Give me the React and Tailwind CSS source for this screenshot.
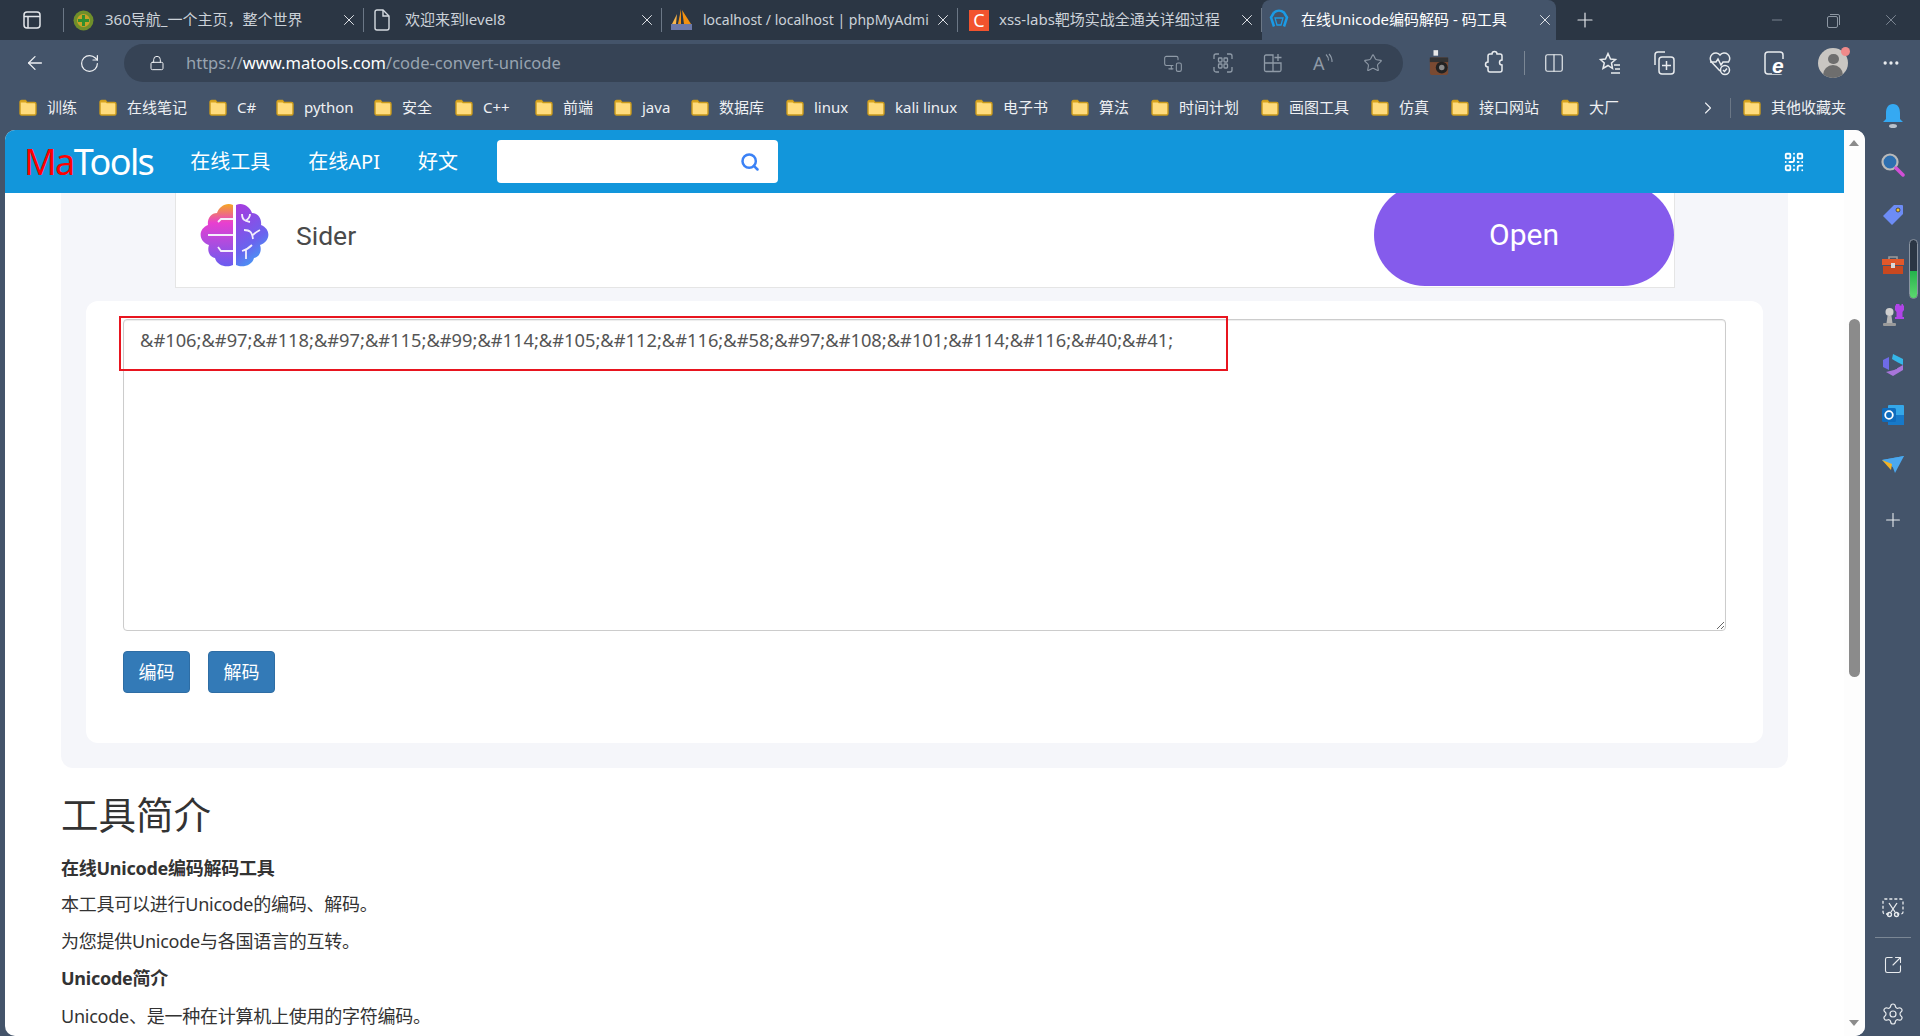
import React from "react";
import {
  ArrowLeft,
  RotateCw,
  Lock,
  Star,
  X,
  Plus,
  Minus,
  ChevronRight,
  Settings,
  SquareArrowOutUpRight,
  Search,
  QrCode,
  Ellipsis,
  Columns2,
  MonitorSmartphone,
} from "lucide-react";

const bookmarks = [
  ["训练", 80],
  ["在线笔记", 110],
  ["C#", 67],
  ["python", 98],
  ["安全", 81],
  ["C++", 80],
  ["前端", 79],
  ["java", 77],
  ["数据库", 95],
  ["linux", 81],
  ["kali linux", 108],
  ["电子书", 96],
  ["算法", 80],
  ["时间计划", 110],
  ["画图工具", 110],
  ["仿真", 80],
  ["接口网站", 110],
  ["大厂", 80],
];

const Folder = () => (
  <svg width="18" height="17" viewBox="0 0 18 17" className="shrink-0">
    <path d="M1 3a1.5 1.5 0 0 1 1.5-1.5h4L8 3.5h7.5A1.5 1.5 0 0 1 17 5v9.5a1.5 1.5 0 0 1-1.5 1.5h-13A1.5 1.5 0 0 1 1 14.500z" fill="#ffdc7d" stroke="#c99a1c" strokeWidth="1.4" />
    <path d="M1 3a1.5 1.500 0 0 1 1.500-1.500h4L8 3.500H1z" fill="#d9a520" />
  </svg>
);

const Tab = ({ icon, title, width, active, size = "text-[15px]" }) => (
  <div
    className={
      active
        ? `flex h-10 items-center rounded-t-lg bg-[#44546a] pl-[7px] pr-[2px] text-white ${width}`
        : `flex h-[24px] items-center border-r border-[#6b7786] pl-[9px] pr-[5px] text-[#ccd2d9] ${width}`
    }
  >
    <span className="flex w-[32px] shrink-0 items-center">{icon}</span>
    <span className={`min-w-0 flex-1 overflow-hidden whitespace-nowrap pb-[2px] ${size}`}>{title}</span>
    <X size={18} strokeWidth={1.300} className="ml-1 shrink-0 text-[#e3e6ea]" />
  </div>
);

const Fav360 = () => (
  <svg width="21" height="21" viewBox="0 0 21 21">
    <circle cx="10.500" cy="10.500" r="10" fill="#6f8f2a" />
    <circle cx="10.500" cy="10.500" r="6.500" fill="#c9a227" />
    <path d="M9 5h3v4h4v3h-4v4H9v-4H5V9h4z" fill="#2f8f2f" />
  </svg>
);

const FavFile = () => (
  <svg width="18" height="22" viewBox="0 0 18 22" fill="none" stroke="#d5dae0" strokeWidth="1.400">
    <path d="M2 3a2 2 0 0 1 2-2h6l6 6v12a2 2 0 0 1-2 2H4a2 2 0 0 1-2-2z" />
    <path d="M10 1v6h6" />
  </svg>
);

const FavPma = () => (
  <svg width="21" height="22" viewBox="0 0 21 22">
    <path d="M10 0 7 15h3z" fill="#f29111" />
    <path d="M11 1l2 14h7z" fill="#f29111" />
    <path d="M6 5 1 15h4z" fill="#f8b54a" />
    <rect x="0" y="15" width="21" height="6" fill="#6c78a8" />
  </svg>
);

const FavC = () => (
  <span className="ml-[2px] flex h-[21px] w-[20px] items-center justify-center bg-[#f2532e] text-[18px] leading-none text-white">C</span>
);

const FavMa = () => (
  <svg width="20" height="22" viewBox="0 0 20 22" fill="none" stroke="#1a9be6" strokeWidth="2.500">
    <path d="M5 3.500a8 8 0 0 1 10 0l3 5-3 9M5 3.500l-3 5 3 9" />
    <path d="M6 9h8l-2 7H8z" strokeWidth="1.300" />
  </svg>
);

const Camera = () => (
  <svg width="22" height="28" viewBox="0 0 24 30">
    <rect x="6" y="1" width="5" height="6" fill="#e8e8e8" />
    <rect x="2" y="9" width="20" height="19" rx="2" fill="#7a4a32" />
    <rect x="2" y="9" width="20" height="5" fill="#333" />
    <circle cx="15" cy="20" r="6.500" fill="#222" />
    <circle cx="15" cy="20" r="3" fill="#8a8a8a" />
  </svg>
);

const Puzzle = () => (
  <svg width="22" height="26" viewBox="0 0 22 26" fill="none" stroke="#e8ebee" strokeWidth="1.500">
    <path d="M7 4h2a2.500 2.500 0 0 1 5 0h3a2 2 0 0 1 2 2v4a2.500 2.500 0 0 0 0 5v5a2 2 0 0 1-2 2H7a2 2 0 0 1-2-2v-3a2.500 2.500 0 0 1 0-5V6a2 2 0 0 1 2-2z" />
  </svg>
);

const FavList = () => (
  <svg width="24" height="24" viewBox="0 0 24 24" fill="none" stroke="#e8ebee" strokeWidth="1.500">
    <path d="M10 2.500 12.500 8l5 .5-4 3.500 1 5.500-4.500-3-5 3 1.300-5.500L2.500 8.500l5-.5z" />
    <path d="M16 14h6M17 18h5M13 22h9" />
  </svg>
);

const Collections = () => (
  <svg width="24" height="26" viewBox="0 0 24 26" fill="none" stroke="#e8ebee" strokeWidth="1.500">
    <path d="M3 15V5a3 3 0 0 1 3-3h7" />
    <rect x="7" y="7" width="15" height="17" rx="3" />
    <path d="M14.500 11v9M10 15.500h9" />
  </svg>
);

const Health = () => (
  <svg width="24" height="26" viewBox="0 0 24 26" fill="none" stroke="#e8ebee" strokeWidth="1.500">
    <path d="M12 21 3.500 12a5.500 5.500 0 0 1 8.500-7 5.500 5.500 0 0 1 8.500 7" />
    <path d="M2 12h6l2-3 3 6 2-3h6" />
    <circle cx="17" cy="20" r="4.500" fill="#44546a" />
    <path d="m15 20 1.500 1.500 2.500-3" />
  </svg>
);

const EdgeE = () => (
  <svg width="24" height="26" viewBox="0 0 24 26">
    <rect x="2" y="2" width="18" height="22" rx="3" fill="none" stroke="#e8ebee" strokeWidth="1.500" />
    <rect x="9" y="9" width="15" height="15" fill="#44546a" />
    <text x="9" y="23" fontSize="21" fontWeight="700" fontStyle="italic" fill="#ffffff" fontFamily="Liberation Sans">e</text>
  </svg>
);

const ScanGrid = () => (
  <svg width="20" height="20" viewBox="0 0 20 20" fill="none" stroke="currentColor" strokeWidth="1.300">
    <path d="M6 1H3a2 2 0 0 0-2 2v3M14 1h3a2 2 0 0 1 2 2v3M6 19H3a2 2 0 0 1-2-2v-3M14 19h3a2 2 0 0 0 2-2v-3" />
    <rect x="5.500" y="5" width="3.500" height="4" rx="0.800" />
    <rect x="11" y="5" width="3.500" height="4" rx="0.800" />
    <rect x="5.500" y="11" width="3.500" height="4" rx="0.800" />
    <rect x="11" y="11" width="3.500" height="4" rx="0.800" />
  </svg>
);

const AppsAdd = () => (
  <svg width="20" height="20" viewBox="0 0 20 20" fill="none" stroke="currentColor" strokeWidth="1.300">
    <path d="M10 4V2H3a1.500 1.500 0 0 0-1.500 1.500V17A1.500 1.500 0 0 0 3 18.500h13.500A1.500 1.500 0 0 0 18 17v-7H1.500M10 4v14.500" />
    <path d="M15 1v7M11.500 4.500h7" />
  </svg>
);

const ReadAloud = () => (
  <span className="flex w-[20px] items-start text-[18px] leading-[20px]">
    A
    <svg width="8" height="10" viewBox="0 0 8 10" fill="none" stroke="currentColor" strokeWidth="1.100" className="shrink-0">
      <path d="M1 1.500a8 8 0 0 1 2.500 6M4 1a11 11 0 0 1 3 8" />
    </svg>
  </span>
);

const Avatar = () => (
  <div className="relative h-[30px] w-[30px]">
    <div className="flex h-[30px] w-[30px] flex-col items-center overflow-hidden rounded-full bg-[#c9c6c2]">
      <div className="mt-[6px] h-[11px] w-[11px] rounded-full bg-[#6e6e6e]" />
      <div className="mt-[1px] h-[14px] w-[20px] rounded-t-full bg-[#6e6e6e]" />
    </div>
    <span className="absolute -right-[2px] -top-[1px] h-[9px] w-[9px] rounded-full bg-[#f08a8a]" />
  </div>
);

const Brain = () => (
  <svg width="69" height="64" viewBox="0 0 69 64" className="shrink-0">
    <defs>
      <linearGradient id="leftLobe" x1="0.500" y1="0" x2="0.500" y2="1">
        <stop offset="0" stopColor="#f5a623" />
        <stop offset="0.300" stopColor="#e83fd0" />
        <stop offset="1" stopColor="#6a5cf0" />
      </linearGradient>
      <linearGradient id="rightLobe" x1="0.300" y1="0" x2="0.700" y2="1">
        <stop offset="0" stopColor="#a13fe0" />
        <stop offset="0.600" stopColor="#6a63ee" />
        <stop offset="1" stopColor="#3fa4f5" />
      </linearGradient>
    </defs>
    <path d="M33 2v60c-6 3-16 1-18-7-6-1-8-8-6-13-11-4-11-16-1-20-1-6 3-12 9-12 2-6 9-11 16-8z" fill="url(#leftLobe)" />
    <path d="M36 2v60c6 3 16 1 18-7 6-1 8-8 6-13 11-4 11-16 1-20 1-6-3-12-9-12-2-6-9-11-16-8z" fill="url(#rightLobe)" />
    <g fill="none" stroke="#f4eefc" strokeWidth="1.800">
      <path d="M33 32H8M33 16H21l-3 3M33 48H21l-3-4" />
      <path d="M42 11c0 6 3 7 8 8M50 11c0 4-3 6-5 7M44 27c6 0 8 2 9 9M60 27c-2 1-5 3-7 5M42 48c4-1 7-3 10-6M46 56v-9" />
    </g>
  </svg>
);

// right side bar icons
const Bell = () => (
  <svg width="26" height="26" viewBox="0 0 26 26">
    <path d="M13 1c5 0 7 4 7 9v6l3 3H3l3-3v-6c0-5 2-9 7-9z" fill="#35a9f2" />
    <ellipse cx="13" cy="23" rx="4" ry="2" fill="#b9c2cc" />
  </svg>
);
const Loupe = () => (
  <svg width="24" height="24" viewBox="0 0 24 24">
    <circle cx="9" cy="9" r="7.500" fill="#2d6fb0" stroke="#b9b9b9" strokeWidth="2.200" />
    <path d="m15 15 7 7" stroke="#d24fd6" strokeWidth="3.500" strokeLinecap="round" />
  </svg>
);
const Tag = () => (
  <svg width="22" height="22" viewBox="0 0 22 22">
    <path d="M12 1h8a1 1 0 0 1 1 1v8L10 21 1 12z" fill="#6d8cf5" />
    <circle cx="16" cy="6" r="2" fill="#f2c230" stroke="#333" strokeWidth="0.800" />
  </svg>
);
const Toolbox = () => (
  <svg width="24" height="20" viewBox="0 0 24 20">
    <path d="M8 5V2h8v3" fill="none" stroke="#9a9a9a" strokeWidth="1.600" />
    <rect x="1" y="4" width="22" height="6" fill="#e2582a" />
    <rect x="2" y="11" width="20" height="8" fill="#c9481f" />
    <rect x="10" y="8" width="4" height="5" fill="#d8d8d8" />
  </svg>
);
const Chess = () => (
  <svg width="24" height="24" viewBox="0 0 24 24">
    <path d="M17 1h1.500v1.500h2V1H22v1.500h1V7l-1.500 2v5H23v2h-9v-2h1.500V9L14 7V2.500h1V1h2z" fill="#b044e8" />
    <circle cx="8.500" cy="9" r="4" fill="#cfcfcf" />
    <path d="M6.500 13h4l1 7H5.500z" fill="#b5b5b5" />
    <rect x="2" y="20" width="13" height="3" rx="1" fill="#9a9a9a" />
  </svg>
);
const Copilot = () => (
  <svg width="22" height="24" viewBox="0 0 22 24">
    <path d="M11 1 21 6v6l-6-3-5-3z" fill="#35b6e8" />
    <path d="M1 7l6-3v13l-6-3z" fill="#6e6be8" />
    <path d="M21 12v5l-10 6-7-4 8-2z" fill="#a875da" />
    <path d="M7 8l8 1v7l-8 1z" fill="#44546a" />
  </svg>
);
const Outlook = () => (
  <svg width="22" height="22" viewBox="0 0 22 22">
    <rect x="6" y="1" width="16" height="20" rx="1" fill="#35a7e8" />
    <path d="M6 11h16v10H6z" fill="#1779c9" />
    <rect x="0" y="4" width="14" height="14" rx="1.500" fill="#0f6cbd" />
    <circle cx="7" cy="11" r="3.800" fill="none" stroke="#fff" strokeWidth="1.800" />
  </svg>
);
const Send = () => (
  <svg width="22" height="18" viewBox="0 0 22 18">
    <path d="M0 4 22 0 12 12z" fill="#35a7e8" />
    <path d="M0 4 10 9l3 8 9-17z" fill="#4ba8ef" />
    <path d="M0 4 10 8 9 14z" fill="#f5b323" />
  </svg>
);
const Snip = () => (
  <svg width="22" height="20" viewBox="0 0 22 20" fill="none" stroke="#e8ebee" strokeWidth="1.300">
    <path d="M7 16H3a2 2 0 0 1-2-2V3a2 2 0 0 1 2-2h16a2 2 0 0 1 2 2v11a2 2 0 0 1-2 2h-4" strokeDasharray="3 2" />
    <path d="m7 5 6 9M15 5l-6 9" />
    <circle cx="7.500" cy="16.500" r="2" />
    <circle cx="14.500" cy="16.500" r="2" />
  </svg>
);

const SideSlot = ({ h, children }) => (
  <div className={`flex w-full items-center justify-center ${h}`}>{children}</div>
);

const App = () => {
  return (
    <div className="flex h-[1036px] w-[1920px] flex-col overflow-hidden bg-[#44546a] [font-family:'Noto_Sans','Noto_Sans_CJK_SC',sans-serif]">
      {/* tab strip */}
      <div className="flex h-10 shrink-0 items-center bg-[#2b3644] pr-[20px]">
        <div className="flex h-[24px] w-[64px] shrink-0 items-center justify-center border-r border-[#6b7786]">
          <svg width="20" height="20" viewBox="0 0 20 20" fill="none" stroke="#e3e6ea" strokeWidth="1.500">
            <rect x="2" y="2" width="16" height="16" rx="3" />
            <path d="M2 6.500h16M6 6.500V18" />
          </svg>
        </div>
        <Tab width="w-[300px]" icon={<Fav360 />} title="360导航_一个主页，整个世界" />
        <Tab width="w-[298px]" icon={<FavFile />} title="欢迎来到level8" />
        <Tab width="w-[296px]" size="text-[14px]" icon={<FavPma />} title="localhost / localhost | phpMyAdmi" />
        <Tab width="w-[304px]" icon={<FavC />} title="xss-labs靶场实战全通关详细过程" />
        <Tab active width="w-[294px]" icon={<FavMa />} title="在线Unicode编码解码 - 码工具" />
        <Plus size={24} strokeWidth={1.200} className="ml-[17px] text-[#e3e6ea]" />
        <div className="ml-auto flex items-center gap-[41px] text-[#8d97a3]">
          <Minus size={16} strokeWidth={1.200} />
          <svg width="15" height="15" viewBox="0 0 15 15" fill="none" stroke="#8d97a3">
            <rect x="1.500" y="3.500" width="10" height="11" rx="1.500" />
            <path d="M4 1.500h8a1.500 1.500 0 0 1 1.500 1.500v9" />
          </svg>
          <X size={18} strokeWidth={1.100} />
        </div>
      </div>

      {/* address bar */}
      <div className="flex h-[45px] shrink-0 items-center pb-[2px] pl-[24px] pt-[3px]">
        <ArrowLeft size={22} strokeWidth={1.400} className="text-[#eef0f3]" />
        <RotateCw size={21} strokeWidth={1.400} className="ml-[33px] text-[#eef0f3]" />
        <div className="ml-[24px] flex h-[38px] w-[1279px] items-center rounded-full bg-[#364355] pl-[25px] pr-[20px]">
          <Lock size={16} strokeWidth={1.500} className="text-[#eef0f3]" />
          <span className="ml-[21px] text-[16.500px] text-[#98a3b0]">
            https://<span className="text-white">www.matools.com</span>/code-convert-unicode
          </span>
          <div className="ml-auto flex items-center gap-[30px] text-[#8f9aa7]">
            <MonitorSmartphone size={20} strokeWidth={1.300} />
            <ScanGrid />
            <AppsAdd />
            <ReadAloud />
            <Star size={20} strokeWidth={1.300} />
          </div>
        </div>
        <div className="ml-[25px] flex items-center">
          <Camera />
          <div className="ml-[33px]"><Puzzle /></div>
          <div className="ml-[19px] h-[24px] w-px bg-[#7b8795]" />
          <Columns2 size={22} strokeWidth={1.300} className="ml-[18px] text-[#e8ebee]" />
          <div className="ml-[33px]"><FavList /></div>
          <div className="ml-[30px]"><Collections /></div>
          <div className="ml-[32px]"><Health /></div>
          <div className="ml-[31px]"><EdgeE /></div>
          <div className="ml-[31px]"><Avatar /></div>
          <Ellipsis size={20} className="ml-[33px] text-[#e8ebee]" />
        </div>
      </div>

      {/* bookmarks */}
      <div className="flex h-[45px] shrink-0 items-center pl-[19px] text-[15px] text-[#eef0f3]">
        {bookmarks.map(([name, w]) => (
          <div key={name} className="flex shrink-0 items-center gap-[10px]" style={{ width: w }}>
            <Folder />
            <span className="whitespace-nowrap">{name}</span>
          </div>
        ))}
        <ChevronRight size={20} strokeWidth={1.300} className="ml-[57px] shrink-0" />
        <div className="ml-[12px] mr-[12px] h-[20px] w-px shrink-0 bg-[#6b7786]" />
        <div className="flex shrink-0 items-center gap-[10px]">
          <Folder />
          <span className="whitespace-nowrap">其他收藏夹</span>
        </div>
      </div>

      <div className="flex min-h-0 flex-1 pl-[5px]">
        {/* page */}
        <div className="flex w-[1860px] min-w-0 overflow-hidden rounded-[10px] bg-white">
          <div className="flex min-w-0 flex-1 flex-col overflow-hidden">
            <header className="relative z-10 flex h-[63px] shrink-0 items-center bg-[#1296db] pl-[19px] pr-[39px] text-white">
              <span className="text-[36px] leading-none tracking-[-1.600px]">
                <span className="text-[#ff0000]">Ma</span>Tools
              </span>
              <nav className="ml-[37px] flex gap-[38px] text-[20px]">
                <span>在线工具</span>
                <span>在线API</span>
                <span>好文</span>
              </nav>
              <div className="ml-[39px] flex h-[43px] w-[281px] items-center justify-end rounded-[4px] bg-white pr-[18px]">
                <Search size={20} strokeWidth={3} className="text-[#3b82f6]" />
              </div>
              <QrCode size={22} strokeWidth={2} className="ml-auto" />
            </header>

            <main className="-mt-[9px] min-h-0 flex-1 overflow-hidden px-[56px]">
              <section className="rounded-b-[12px] bg-[#f5f6fa] px-[25px] pb-[25px]">
                <div className="ml-[89px] mr-[88px] flex h-[104px] items-center border-x border-b border-[#e5e5e5] bg-white pb-[2px] pl-[24px] [font-family:Roboto,sans-serif]">
                  <Brain />
                  <span className="ml-[27px] pt-[2px] text-[26.500px] text-[#4a4a4a]">Sider</span>
                  <button className="ml-auto h-[102px] w-[300px] rounded-full bg-[#855bec] text-[30px] text-white">Open</button>
                </div>

                <div className="relative mt-[13px] rounded-[12px] bg-white px-[37px] pb-[50px] pt-[18px]">
                  <textarea
                    readOnly
                    className="block h-[312px] w-[1603px] rounded-[4px] border border-[#cccccc] px-[16px] py-[7px] text-[18.300px] leading-[26px] text-[#555555] shadow-[inset_0_1px_1px_rgba(0,0,0,0.075)] outline-none"
                    value="&#38;#106;&#38;#97;&#38;#118;&#38;#97;&#38;#115;&#38;#99;&#38;#114;&#38;#105;&#38;#112;&#38;#116;&#38;#58;&#38;#97;&#38;#108;&#38;#101;&#38;#114;&#38;#116;&#38;#40;&#38;#41;"
                  />
                  <div className="absolute left-[33px] top-[15px] h-[55px] w-[1109px] border-2 border-[#e8151f]" />
                  <div className="mt-[20px] flex gap-[18px]">
                    <button className="h-[42px] w-[67px] rounded-[4px] border border-[#2e6da4] bg-[#337ab7] text-[18px] text-white">编码</button>
                    <button className="h-[42px] w-[67px] rounded-[4px] border border-[#2e6da4] bg-[#337ab7] text-[18px] text-white">解码</button>
                  </div>
                </div>
              </section>

              <h2 className="mt-[25px] text-[37.500px] font-normal leading-[44px] text-[#333333]">工具简介</h2>
              <div className="mt-[13px] text-[18px] leading-[37px] tracking-[-0.250px] text-[#333333]">
                <p className="-mb-px font-bold">在线Unicode编码解码工具</p>
                <p>本工具可以进行Unicode的编码、解码。</p>
                <p>为您提供Unicode与各国语言的互转。</p>
                <p className="mb-px font-bold">Unicode简介</p>
                <p>Unicode、是一种在计算机上使用的字符编码。</p>
              </div>
            </main>
          </div>

          {/* scrollbar */}
          <div className="flex w-[21px] shrink-0 flex-col items-center bg-[#fdfdfd] pr-[1px] pt-[10px]">
            <span className="h-0 w-0 border-x-[5px] border-b-[6px] border-x-transparent border-b-[#8b8b8b]" />
            <div className="mt-[173px] h-[358px] w-[11px] rounded-full bg-[#8b8b8b]" />
            <span className="mb-[10px] mt-auto h-0 w-0 border-x-[5px] border-t-[6px] border-x-transparent border-t-[#8b8b8b]" />
          </div>
        </div>

        {/* edge side bar */}
        <aside className="relative flex w-[55px] shrink-0 flex-col items-center text-[#e8ebee]">
          <div className="-mt-[39px] w-full">
            <SideSlot h="h-[49px]"><Bell /></SideSlot>
            <SideSlot h="h-[50px]"><Loupe /></SideSlot>
            <SideSlot h="h-[50px]"><Tag /></SideSlot>
            <SideSlot h="h-[50px]"><Toolbox /></SideSlot>
            <SideSlot h="h-[50px]"><Chess /></SideSlot>
            <SideSlot h="h-[50px]"><Copilot /></SideSlot>
            <SideSlot h="h-[50px]"><Outlook /></SideSlot>
            <SideSlot h="h-[50px]"><Send /></SideSlot>
            <SideSlot h="h-[60px]"><Plus size={22} strokeWidth={1.200} /></SideSlot>
          </div>
          <div className="mt-auto w-full">
            <SideSlot h="h-[58px]"><Snip /></SideSlot>
            <div className="mx-auto h-px w-[36px] bg-[#7b8795]" />
            <SideSlot h="h-[54px]"><SquareArrowOutUpRight size={20} strokeWidth={1.300} /></SideSlot>
            <SideSlot h="h-[44px]"><Settings size={24} strokeWidth={1.200} /></SideSlot>
          </div>
          <div className="absolute left-[44px] top-[109px] flex h-[60px] w-[9px] flex-col justify-end overflow-hidden rounded-full border border-[#8a94a1] bg-[#2b3644]">
            <div className="h-[27px] bg-gradient-to-b from-[#22b14c] to-[#5bd96f]" />
          </div>
        </aside>
      </div>
    </div>
  );
};

export default App;
